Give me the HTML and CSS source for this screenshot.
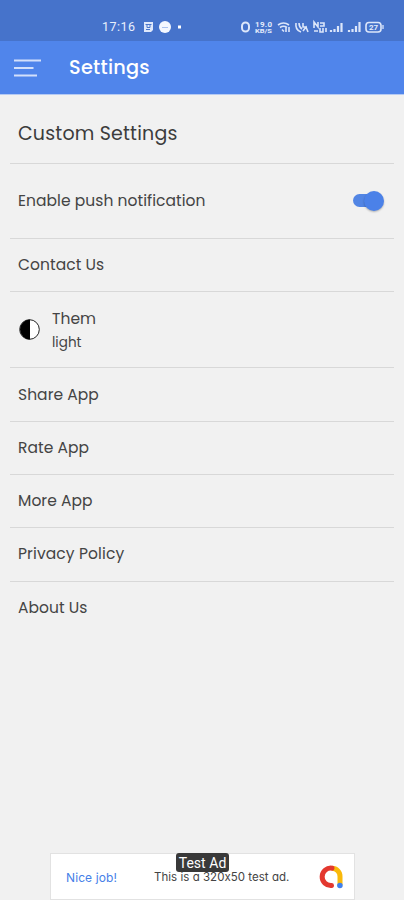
FILE: index.html
```html
<!DOCTYPE html>
<html lang="en">
<head>
<meta charset="utf-8">
<title>Settings</title>
<link rel="stylesheet" href="styles.css">
</head>
<body>
<div class="status">
  <span class="time">17:16</span>
  <svg class="status-left" width="42" height="14" viewBox="0 0 42 14">
    <path fill="#dfe8fb" d="M2 2h9v8l-2 2H2z"/>
    <path stroke="#4a76cb" stroke-width="1" fill="none" d="M3.500 4.500h6M5 4.500v3h3v-3M4 9.500h4"/>
    <circle cx="23" cy="7" r="6" fill="#f4f8ff"/>
    <path stroke="#a9c2f0" d="M20 7.500h6"/>
    <rect x="36" y="5.500" width="3" height="3" fill="#fff"/>
  </svg>
  <svg class="status-right" width="146" height="16" viewBox="0 0 146 16" fill="none" stroke="#dce6fa" stroke-width="1.300">
    <rect x="2" y="3.500" width="7" height="9" rx="3.500" stroke-width="2"/>
    <g class="tiny">
      <text x="15" y="8" textLength="17">19.0</text>
      <text x="15" y="14" textLength="17" lengthAdjust="spacingAndGlyphs">KB/S</text>
      <text x="129" y="11" textLength="9">27</text>
    </g>
    <path d="M38 6q5.500-4 11 0M40 8.500q3.500-2.500 7 0M42 10.500l2 2M46 8v5M49 8v5" stroke-width="1.600"/>
    <path d="M56 4q-1 7 5 9M59 4q0 4 3 6M63 4v4h4M63 12l3-4 2 5" stroke-width="1.600"/>
    <path d="M74 9V3l4 5V3M80 4h4v3h-4M74 12h4M80 9v4h3V9M86 9v4" stroke-width="1.600"/>
    <path stroke-width="2.200" d="M91 11v2M94.500 10v3M98 7v6M101.500 4v9M109 11v2M112.500 10v3M116 7v6M119.500 3v10"/>
    <rect x="126" y="3.500" width="15" height="9.500" rx="3" stroke-width="1.600"/>
    <path d="M143 6v4"/>
  </svg>
</div>
<header class="bar">
  <svg width="28" height="18" viewBox="0 0 28 18" stroke="#d3e0fb" stroke-width="2">
    <path d="M0 1.500h27M0 9h19.500M0 16.500h23"/>
  </svg>
  <h1>Settings</h1>
</header>
<main>
  <div class="row heading"><span>Custom Settings</span></div>
  <div class="row push"><span>Enable push notification</span><span class="switch"><span class="knob"></span></span></div>
  <div class="row"><span>Contact Us</span></div>
  <div class="row theme">
    <svg width="22" height="22" viewBox="0 0 22 22"><circle cx="10.500" cy="10.500" r="9.800" fill="#fff" stroke="#222" stroke-width="1"/><path d="M11 .5A10 10 0 0 0 11 20.500z" fill="#000"/></svg>
    <div class="stack"><span>Them</span><span class="value">light</span></div>
  </div>
  <div class="row"><span>Share App</span></div>
  <div class="row"><span>Rate App</span></div>
  <div class="row more"><span>More App</span></div>
  <div class="row privacy"><span>Privacy Policy</span></div>
  <div class="row last"><span>About Us</span></div>
</main>
<footer class="ad">
  <span class="nice">Nice job!</span>
  <span class="msg">This is a 320x50 test ad.</span>
  <svg width="26" height="26" viewBox="0 0 26 26" fill="none" stroke-linecap="round" stroke-width="5">
    <path stroke="#f9b90b" stroke-linecap="butt" d="M14 4.200A8 8 0 0 1 22 12.500V21"/>
    <path stroke="#e3382f" d="M14 4.200A8.700 8.700 0 1 0 13.500 21.500"/>
    <circle cx="21.900" cy="21.500" r="2.800" fill="#3f80ee"/>
  </svg>
  <span class="badge">Test Ad</span>
</footer>
</body>
</html>
```
FILE: styles.css
```css
* { box-sizing: border-box; }
body {
  margin: 0;
  height: 900px;
  overflow: hidden;
  display: flex;
  flex-direction: column;
  background: #f1f1f1;
  color: #444;
  font-family: Poppins, Inter, sans-serif;
  font-size: 15.5px;
  letter-spacing: 0.05px;
}
.status {
  height: 41px;
  flex: none;
  display: flex;
  align-items: center;
  padding: 0 18px 0 102px;
  background: #4673cb;
  color: #e8effc;
}
.status > * { position: relative; top: 6px; }
.time {
  width: 33px;
  font: 12.5px Roboto, sans-serif;
  letter-spacing: 0.5px;
  white-space: nowrap;
}
.status-left { margin-left: 7px; }
.status-right { margin-left: auto; }
.tiny {
  fill: #e4ecfb;
  stroke: none;
  font: bold 8px Roboto, sans-serif;
  letter-spacing: 0;
}
.tiny text:nth-child(2) { font-size: 6px; }
.bar {
  height: 54px;
  flex: none;
  display: flex;
  align-items: center;
  padding-left: 14px;
  background: #5085eb;
  border-bottom: 1px solid #b5caf3;
}
.bar h1 {
  margin: 0 0 0 27px;
  color: #fff;
  font-size: 19.3px;
  font-weight: 500;
  letter-spacing: 0.25px;
}
main { padding: 0 10px; flex: 1; }
.row {
  height: 53.3px;
  display: flex;
  align-items: center;
  padding: 0 8px;
  border-bottom: 1px solid #d8d8d8;
  white-space: nowrap;
}
.heading { height: 68.5px; padding-top: 9px; font-size: 19px; letter-spacing: 0.18px; color: #3c3c3c; }
.push { height: 75px; justify-content: space-between; }
.theme { height: 76.7px; gap: 11px; }
.theme svg { margin-left: 1px; }
.more { padding-bottom: 1px; }
.privacy { height: 53.6px; padding-bottom: 2px; letter-spacing: 0.12px; }
.last { height: 51px; border: 0; }
.stack { display: flex; flex-direction: column; padding-top: 2px; }
.stack span { line-height: 24px; }
.stack .value { font-size: 13.5px; }
.switch {
  width: 29px;
  height: 13px;
  border-radius: 7px;
  margin-right: 4px;
  background: #5285e4;
  display: flex;
  align-items: center;
  justify-content: flex-end;
}
.knob {
  width: 20px;
  height: 20px;
  flex: none;
  margin-right: -2px;
  border-radius: 50%;
  background: #4b81e8;
  box-shadow: 0 1px 2px #0004;
}
.ad {
  position: relative;
  width: 305px;
  height: 47px;
  margin-left: 50px;
  display: flex;
  align-items: center;
  padding: 1px 10px 0 15px;
  background: #fff;
  border: 1px solid #e2e2e2;
  font-family: Inter, sans-serif;
  font-feature-settings: "cv11", "calt" 0;
  font-size: 11.5px;
  letter-spacing: 0.03px;
}
.nice { width: 88px; color: #4680e8; font-size: 12px; letter-spacing: 0.1px; }
.msg { flex: 1; white-space: nowrap; color: #444; }
.badge {
  position: absolute;
  left: 125px;
  top: -1px;
  width: 53px;
  height: 19px;
  border-radius: 3px;
  background: #393939;
  color: #fff;
  font: 14px/20px Roboto, sans-serif;
  text-align: center;
}
```
